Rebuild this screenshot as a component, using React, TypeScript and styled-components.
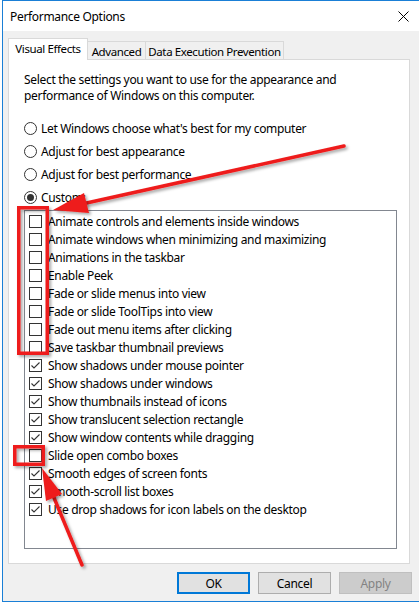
import React from "react";
import styled, { createGlobalStyle, css } from "styled-components";

const GlobalStyle = createGlobalStyle`
  html, body { margin: 0; padding: 0; background: #ffffff; }
  body { font-family: "Noto Sans", "Open Sans", sans-serif; font-size: 12px; color: #000; }
  * { box-sizing: border-box; }
`;

const FONT = `"Noto Sans", "Open Sans", sans-serif`;
const SPACING = "-0.32px";

const Desktop = styled.div`
  position: relative;
  width: 419px;
  height: 603px;
  padding-left: 2px;
  background: #ffffff;
  overflow: hidden;
`;

const Window = styled.div`
  width: 417px;
  height: 602px;
  border-top: 1px solid #1a7fd6;
  border-left: 1px solid #1a7fd6;
  border-bottom: 1px solid #1a7fd6;
  display: flex;
  flex-direction: column;
  background: #f0f0f0;
`;

const TitleBar = styled.div`
  height: 30px;
  flex: none;
  background: #ffffff;
  display: flex;
  align-items: center;
  justify-content: space-between;
  padding-left: 7px;
`;

const Title = styled.span`
  font-family: ${FONT};
  font-size: 12px;
  letter-spacing: ${SPACING};
  color: #000;
`;

const CloseButton = styled.div`
  width: 30px;
  height: 30px;
  display: flex;
  align-items: center;
  justify-content: center;
  margin-right: 1px;
`;

const Body = styled.div`
  flex: 1;
  display: flex;
  flex-direction: column;
  padding-top: 7px;
`;

const TabStrip = styled.div`
  display: flex;
  align-items: flex-end;
  padding-left: 5px;
  height: 21px;
  position: relative;
  z-index: 1;
`;

const Tab = styled.div<{ $active?: boolean; $w: number }>`
  width: ${(p) => p.$w}px;
  flex: none;
  font-family: ${FONT};
  font-size: 11.5px;
  letter-spacing: -0.4px;
  white-space: nowrap;
  color: #000;
  display: flex;
  align-items: center;
  justify-content: center;
  border: 1px solid #d9d9d9;
  border-bottom: none;
  ${(p) =>
    p.$active
      ? css`
          background: #ffffff;
          padding-bottom: 2px;
          margin-bottom: -1px;
          height: 22px;
        `
      : css`
          height: 18px;
          background: #f0f0f0;
          margin-left: -1px;
          padding-top: 1px;
        `}
`;

const Panel = styled.div`
  margin: 0 9px 0 5px;
  height: 505px;
  background: #ffffff;
  border: 1px solid #d9d9d9;
  padding: 12px 0 0 15px;
  display: flex;
  flex-direction: column;
`;

const DescLine = styled.div`
  height: 16px;
  font-family: ${FONT};
  font-size: 12px;
  letter-spacing: ${SPACING};
  line-height: 16px;
  color: #000;
  white-space: nowrap;
`;

const RadioGroup = styled.div`
  margin-top: 13px;
  display: flex;
  flex-direction: column;
`;

const RadioRow = styled.div`
  height: 23px;
  display: flex;
  align-items: center;
  gap: 4px;
  font-family: ${FONT};
  font-size: 12px;
  letter-spacing: ${SPACING};
`;

const RadioCircle = styled.span<{ $checked?: boolean }>`
  width: 13px;
  height: 13px;
  border-radius: 50%;
  border: 1px solid #333333;
  background: #ffffff;
  display: flex;
  align-items: center;
  justify-content: center;
  flex: none;
  &::after {
    content: "";
    width: 7px;
    height: 7px;
    border-radius: 50%;
    background: ${(p) => (p.$checked ? "#333333" : "transparent")};
  }
`;

const ListBox = styled.div`
  margin-top: 1px;
  width: 373px;
  height: 339px;
  border: 1px solid #828790;
  background: #ffffff;
  padding: 1px 0 0 4px;
  display: flex;
  flex-direction: column;
`;

const ItemRow = styled.div`
  height: 18px;
  display: flex;
  align-items: center;
  gap: 6px;
  font-family: ${FONT};
  font-size: 12px;
  letter-spacing: ${SPACING};
  color: #000;
`;

const Box = styled.span`
  width: 13px;
  height: 13px;
  border: 1px solid #333333;
  background: #ffffff;
  flex: none;
  display: flex;
  align-items: center;
  justify-content: center;
`;

const ButtonRow = styled.div`
  display: flex;
  justify-content: flex-end;
  gap: 8px;
  padding-right: 7px;
  margin-top: 8px;
`;

const Button = styled.div<{ $variant?: "default" | "disabled" }>`
  width: 73px;
  height: 22px;
  display: flex;
  align-items: center;
  justify-content: center;
  font-family: ${FONT};
  font-size: 12px;
  letter-spacing: ${SPACING};
  background: #e1e1e1;
  border: 1px solid #adadad;
  color: #000;
  ${(p) =>
    p.$variant === "default" &&
    css`
      border: 2px solid #0078d7;
    `}
  ${(p) =>
    p.$variant === "disabled" &&
    css`
      background: #cccccc;
      border-color: #bfbfbf;
      color: #838383;
    `}
`;

const Overlay = styled.svg`
  position: absolute;
  left: 0;
  top: 0;
  pointer-events: none;
`;

const radios = [
  { label: "Let Windows choose what's best for my computer", checked: false },
  { label: "Adjust for best appearance", checked: false },
  { label: "Adjust for best performance", checked: false },
  { label: "Custom:", checked: true },
];

const items: [string, boolean][] = [
  ["Animate controls and elements inside windows", false],
  ["Animate windows when minimizing and maximizing", false],
  ["Animations in the taskbar", false],
  ["Enable Peek", false],
  ["Fade or slide menus into view", false],
  ["Fade or slide ToolTips into view", false],
  ["Fade out menu items after clicking", false],
  ["Save taskbar thumbnail previews", false],
  ["Show shadows under mouse pointer", true],
  ["Show shadows under windows", true],
  ["Show thumbnails instead of icons", true],
  ["Show translucent selection rectangle", true],
  ["Show window contents while dragging", true],
  ["Slide open combo boxes", false],
  ["Smooth edges of screen fonts", true],
  ["Smooth-scroll list boxes", true],
  ["Use drop shadows for icon labels on the desktop", true],
];

const Check = () => (
  <svg width="11" height="11" viewBox="0 0 11 11">
    <path d="M1.5 5.5 L4 8 L9.5 2.5" fill="none" stroke="#333" strokeWidth="1.1" />
  </svg>
);

export default function App() {
  return (
    <>
      <GlobalStyle />
      <Desktop>
        <Window>
          <TitleBar>
            <Title>Performance Options</Title>
            <CloseButton>
              <svg width="11" height="11" viewBox="0 0 11 11">
                <path d="M0.5 0.5 L10.5 10.5 M10.5 0.5 L0.5 10.5" stroke="#000" strokeWidth="1" />
              </svg>
            </CloseButton>
          </TitleBar>
          <Body>
            <TabStrip>
              <Tab $active $w={80}>Visual Effects</Tab>
              <Tab $w={59}>Advanced</Tab>
              <Tab $w={139}>Data Execution Prevention</Tab>
            </TabStrip>
            <Panel>
              <DescLine>Select the settings you want to use for the appearance and</DescLine>
              <DescLine>performance of Windows on this computer.</DescLine>
              <RadioGroup>
                {radios.map((r) => (
                  <RadioRow key={r.label}>
                    <RadioCircle $checked={r.checked} />
                    <span>{r.label}</span>
                  </RadioRow>
                ))}
              </RadioGroup>
              <ListBox>
                {items.map(([label, on]) => (
                  <ItemRow key={label}>
                    <Box>{on && <Check />}</Box>
                    <span>{label}</span>
                  </ItemRow>
                ))}
              </ListBox>
            </Panel>
            <ButtonRow>
              <Button $variant="default">OK</Button>
              <Button>Cancel</Button>
              <Button $variant="disabled">Apply</Button>
            </ButtonRow>
          </Body>
        </Window>
        <Overlay width="419" height="603" viewBox="0 0 419 603">
          <defs>
            <filter id="sh" x="-20%" y="-20%" width="140%" height="140%">
              <feDropShadow dx="2" dy="2" stdDeviation="1.6" floodColor="#000" floodOpacity="0.35" />
            </filter>
          </defs>
          <g filter="url(#sh)" fill="none" stroke="#ee1c1c">
            <rect x="18.75" y="207.75" width="28.5" height="145.5" strokeWidth="3.5" />
            <rect x="14.75" y="446.75" width="28.5" height="17.5" strokeWidth="3.5" />
            <path d="M344 146 L82 204" strokeWidth="3.5" strokeLinecap="round" />
            <path d="M82 565 L52 493" strokeWidth="3.5" strokeLinecap="round" />
          </g>
          <g filter="url(#sh)" fill="#ee1c1c">
            <polygon points="53,210 84,193 89,213" />
            <polygon points="42,468 62,494 46,501" />
          </g>
        </Overlay>
      </Desktop>
    </>
  );
}
